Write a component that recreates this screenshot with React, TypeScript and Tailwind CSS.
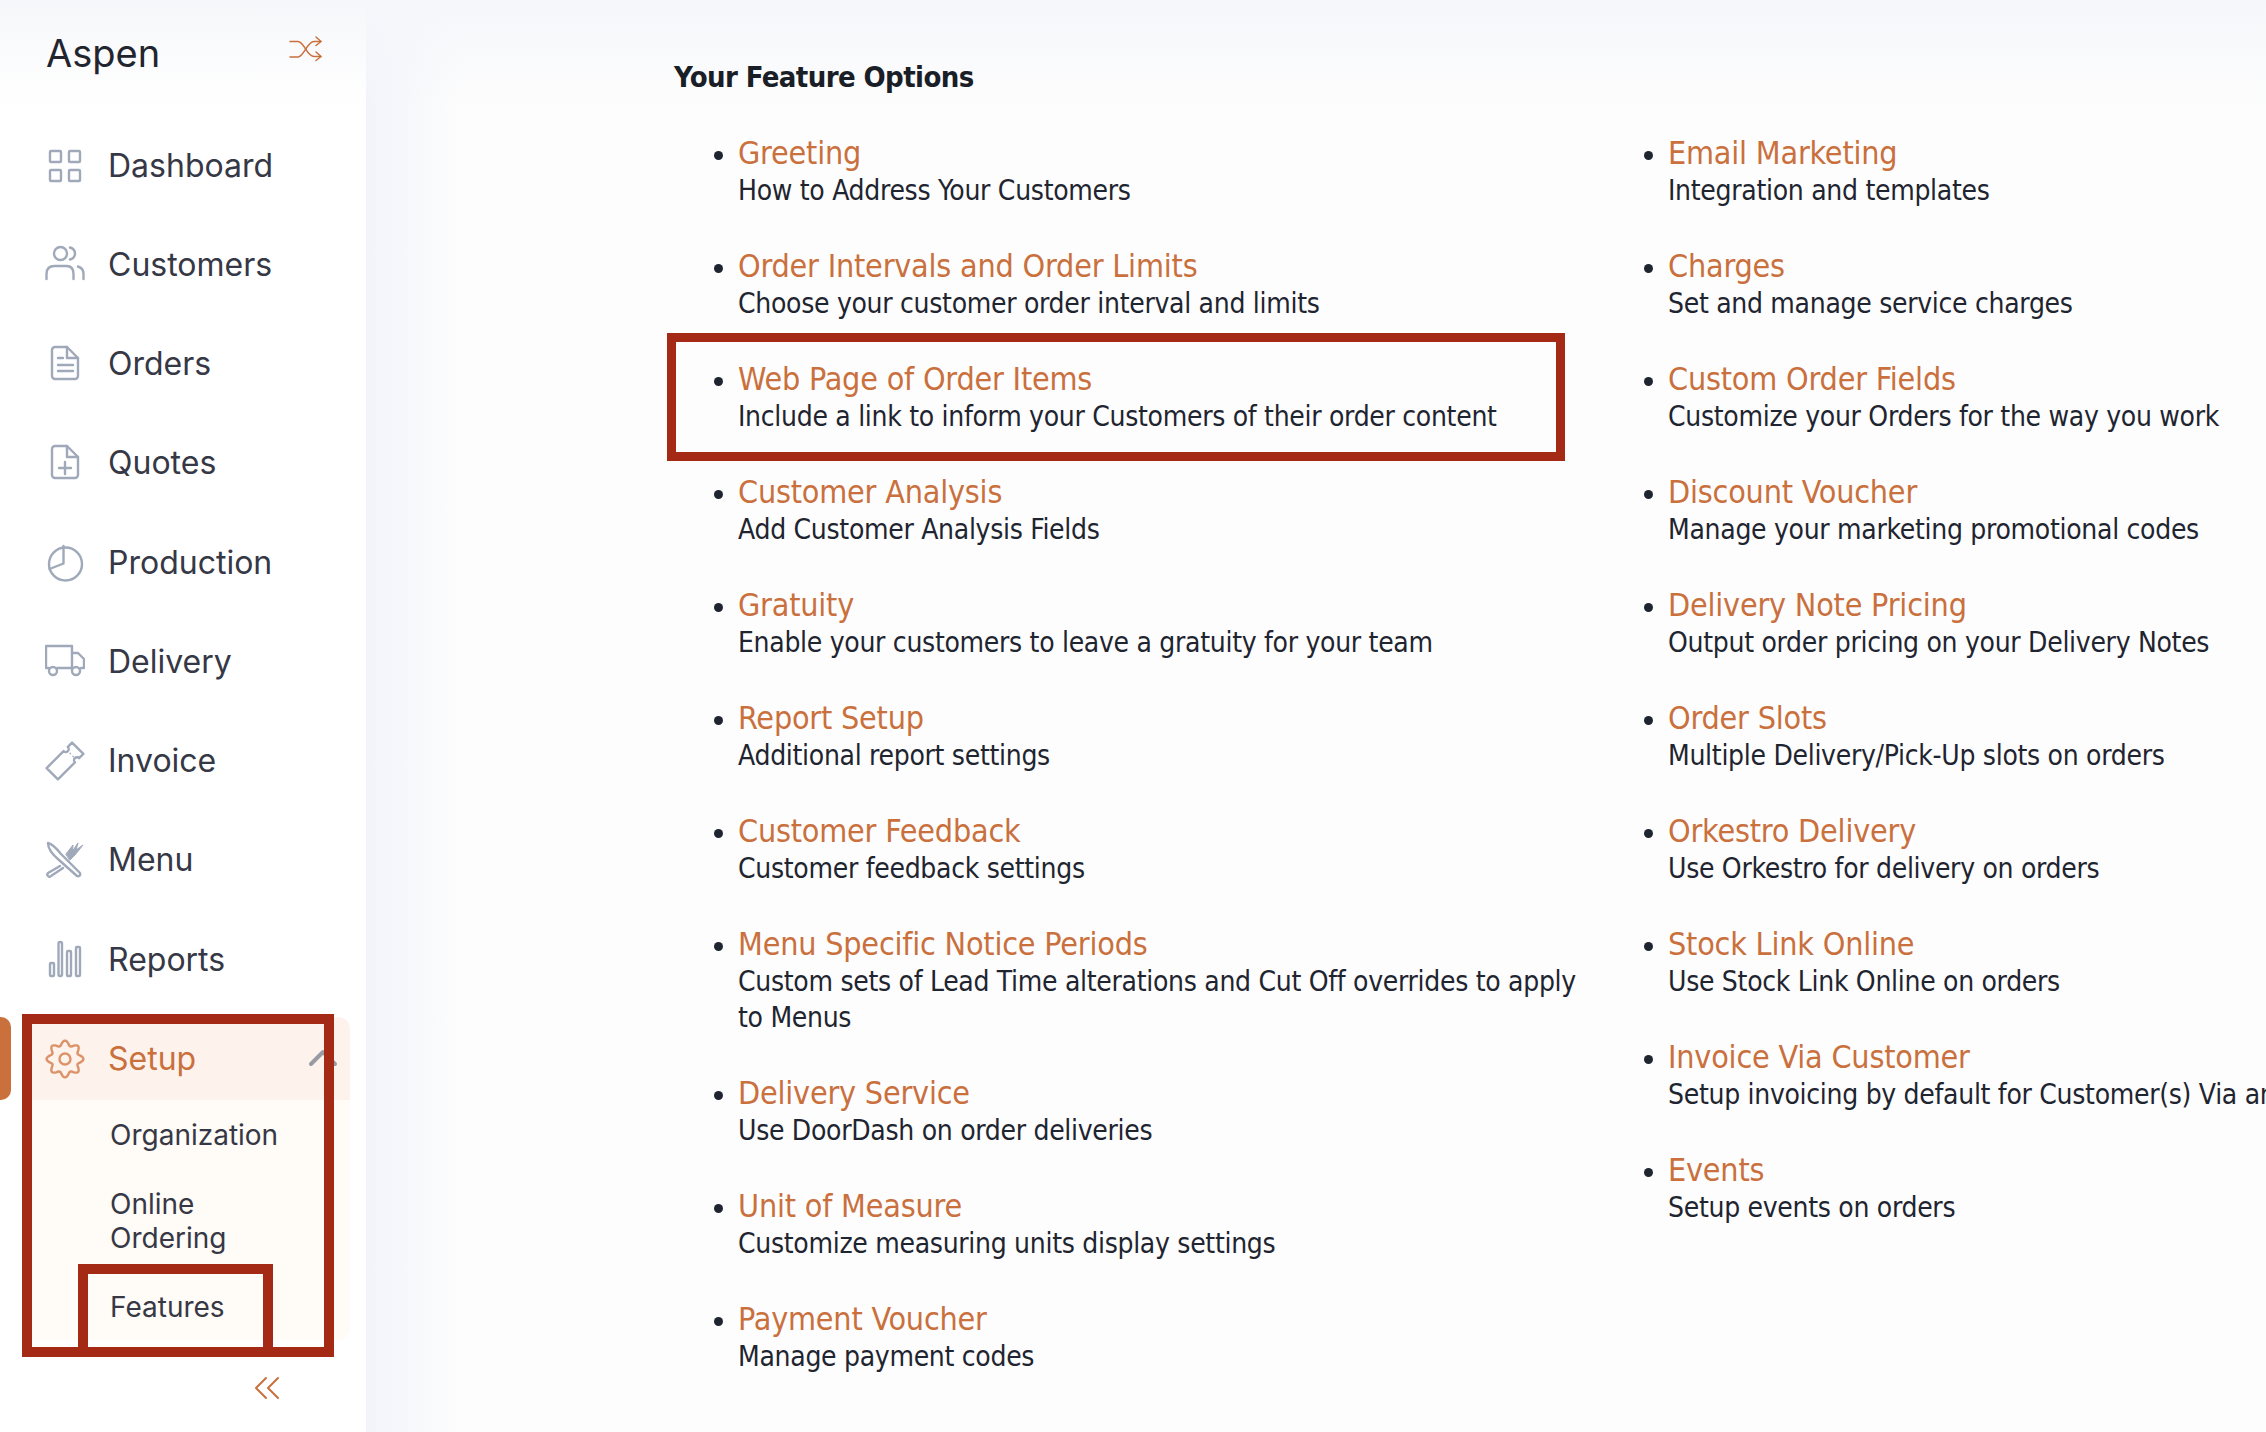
import type { ReactNode } from 'react';
import { ChevronUp } from 'lucide-react';

const iconProps = {
  width: 40,
  height: 40,
  viewBox: '0 0 40 40',
  fill: 'none',
  stroke: '#a0a9ba',
  strokeWidth: 2.4,
  strokeLinecap: 'round' as const,
  strokeLinejoin: 'round' as const,
};

// smooth eight lobed outline for the gear
const gearPath = (() => {
  const points: string[] = [];
  for (let i = 0; i < 160; i++) {
    const a = (i / 160) * Math.PI * 2;
    const r = 16 + 2.4 * Math.cos(8 * a);
    points.push(`${(20 + r * Math.cos(a)).toFixed(2)} ${(20 + r * Math.sin(a)).toFixed(2)}`);
  }
  return `M${points.join('L')}Z`;
})();

const DashboardIcon = () => (
  <svg {...iconProps}>
    <rect x="5" y="5" width="11" height="11" rx="1" />
    <rect x="24" y="5" width="11" height="11" rx="1" />
    <rect x="5" y="24" width="11" height="11" rx="1" />
    <rect x="24" y="24" width="11" height="11" rx="1" />
  </svg>
);

const CustomersIcon = () => (
  <svg {...iconProps}>
    <circle cx="15.5" cy="8.5" r="6.5" />
    <path d="M25 2.500c3.500 1 5 3.500 5 6s-1.500 5-5 6" />
    <path d="M1.500 34v-5c0-5 3-8 8-8h12c5 0 7 3 7 8v5" />
    <path d="M33 21.500c3.500 1 5.500 3.500 5.500 7.500v5" />
  </svg>
);

const OrdersIcon = () => (
  <svg {...iconProps}>
    <path d="M10 3h12l11 11v18a3 3 0 0 1-3 3H10a3 3 0 0 1-3-3V6a3 3 0 0 1 3-3z" />
    <path d="M22 3v11h11" />
    <path d="M13 14h5M13 21h15M13 27h15" />
  </svg>
);

const QuotesIcon = () => (
  <svg {...iconProps}>
    <path d="M10 3h12l11 11v18a3 3 0 0 1-3 3H10a3 3 0 0 1-3-3V6a3 3 0 0 1 3-3z" />
    <path d="M22 3v11h11" />
    <path d="M20 19v12M14 25h12" />
  </svg>
);

const ProductionIcon = () => (
  <svg {...iconProps}>
    <circle cx="20.500" cy="21" r="16.500" />
    <path d="M18.500 3v17.500L4.500 26" />
  </svg>
);

const DeliveryIcon = () => (
  <svg {...iconProps}>
    <path d="M4 26H1V4h26v22H12" />
    <path d="M27 11h6l6 6v9h-3" />
    <path d="M27 26h-1" />
    <circle cx="8" cy="29" r="4" />
    <circle cx="31" cy="29" r="4" />
  </svg>
);

const InvoiceIcon = () => (
  <svg {...iconProps}>
    <g transform="translate(20 20) rotate(-45)">
      <path d="M-18 -8H6a3 3 0 0 0 6 0H18V8H12a3 3 0 0 0-6 0H-18z" />
      <path d="M9 -2v1M9 2v1" strokeWidth="1.200" />
    </g>
  </svg>
);

const MenuIcon = () => (
  <svg {...iconProps}>
    <path d="M3 3c4 1 9 6 13 11l19 19c1 2-1 4-3 3L14 20C8 15 3 9 3 3z" />
    <path d="M15 26L3 33c-2 2 1 5 3 3l12-8" />
    <path d="M21 14L28 5l-.5 6L33 3l-2 7 7-5-8 10-5 5z" fill="#a0a9ba" strokeWidth="1" />
  </svg>
);

const ReportsIcon = () => (
  <svg {...iconProps}>
    <rect x="5" y="23" width="4" height="13" rx="1" />
    <rect x="13.500" y="2" width="3.500" height="34" rx="1.500" />
    <rect x="22" y="11" width="4" height="25" rx="1" />
    <rect x="31" y="7" width="4" height="29" rx="1" />
  </svg>
);

const SetupIcon = () => (
  <svg {...iconProps} stroke="#dc936a">
    <path d={gearPath} />
    <circle cx="20" cy="20" r="5.500" />
  </svg>
);

const ShuffleIcon = () => (
  <svg width="34" height="28" viewBox="0 0 34 28" fill="none" stroke="#c9703d" strokeWidth="1.500" strokeLinecap="round" strokeLinejoin="round">
    <path d="M1 6.500h8c6 0 9 15 16 15h7" />
    <path d="M1 22h8c6 0 9-15.500 16-15.500h7" />
    <path d="M27 2l5 4.500-5 4M27 17l5 4.500-5 4" />
  </svg>
);

const CollapseIcon = () => (
  <svg width="26" height="24" viewBox="0 0 26 24" fill="none" stroke="#c9703d" strokeWidth="2" strokeLinecap="round" strokeLinejoin="round">
    <path d="M12 2L2 12l10 10M24 2L14 12l10 10" />
  </svg>
);

const navItems: { label: string; icon: ReactNode }[] = [
  { label: 'Dashboard', icon: <DashboardIcon /> },
  { label: 'Customers', icon: <CustomersIcon /> },
  { label: 'Orders', icon: <OrdersIcon /> },
  { label: 'Quotes', icon: <QuotesIcon /> },
  { label: 'Production', icon: <ProductionIcon /> },
  { label: 'Delivery', icon: <DeliveryIcon /> },
  { label: 'Invoice', icon: <InvoiceIcon /> },
  { label: 'Menu', icon: <MenuIcon /> },
  { label: 'Reports', icon: <ReportsIcon /> },
];

const leftOptions = [
  { title: 'Greeting', text: 'How to Address Your Customers' },
  { title: 'Order Intervals and Order Limits', text: 'Choose your customer order interval and limits' },
  { title: 'Web Page of Order Items', text: 'Include a link to inform your Customers of their order content', boxed: true },
  { title: 'Customer Analysis', text: 'Add Customer Analysis Fields' },
  { title: 'Gratuity', text: 'Enable your customers to leave a gratuity for your team' },
  { title: 'Report Setup', text: 'Additional report settings' },
  { title: 'Customer Feedback', text: 'Customer feedback settings' },
  { title: 'Menu Specific Notice Periods', text: 'Custom sets of Lead Time alterations and Cut Off overrides to apply to Menus' },
  { title: 'Delivery Service', text: 'Use DoorDash on order deliveries' },
  { title: 'Unit of Measure', text: 'Customize measuring units display settings' },
  { title: 'Payment Voucher', text: 'Manage payment codes' },
];

const rightOptions = [
  { title: 'Email Marketing', text: 'Integration and templates' },
  { title: 'Charges', text: 'Set and manage service charges' },
  { title: 'Custom Order Fields', text: 'Customize your Orders for the way you work' },
  { title: 'Discount Voucher', text: 'Manage your marketing promotional codes' },
  { title: 'Delivery Note Pricing', text: 'Output order pricing on your Delivery Notes' },
  { title: 'Order Slots', text: 'Multiple Delivery/Pick-Up slots on orders' },
  { title: 'Orkestro Delivery', text: 'Use Orkestro for delivery on orders' },
  { title: 'Stock Link Online', text: 'Use Stock Link Online on orders' },
  { title: 'Invoice Via Customer', text: 'Setup invoicing by default for Customer(s) Via an Account' },
  { title: 'Events', text: 'Setup events on orders' },
];

function Option({ title, text, boxed }: { title: string; text: string; boxed?: boolean }) {
  return (
    <li className="relative mb-[38px] list-disc text-[28px] text-[#1f2530] tracking-[-0.3px]">
      {boxed && (
        <div className="absolute -top-[27px] left-[-71px] h-[128px] w-[898px] border-[9px] border-[#a52a16]" />
      )}
      <div className="text-[32px] leading-[39px] tracking-[-0.2px] text-[#c9703d]">{title}</div>
      <div className="leading-[36px]">{text}</div>
    </li>
  );
}

export default function App() {
  return (
    <div className="flex h-[1432px] w-[2266px] overflow-hidden bg-[#fdfdfd]">
      <aside className="relative flex h-full w-[366px] shrink-0 flex-col bg-white font-['Inter',sans-serif]">
        <div className="flex h-[106px] items-center justify-between bg-gradient-to-b from-[#f6f7fa] to-white pl-[46px] pr-[43px]">
          <span className="text-[38px] leading-none text-[#22252e]">Aspen</span>
          <div className="mb-[8px]">
            <ShuffleIcon />
          </div>
        </div>
        <nav className="flex flex-col pt-[10px]">
          {navItems.map((item) => (
            <div key={item.label} className="flex h-[99.25px] items-center gap-[23px] pl-[45px]">
              {item.icon}
              <span className="text-[32px] text-[#363845]">{item.label}</span>
            </div>
          ))}
        </nav>
        <div className="relative ml-[22px] mt-[8px] w-[328px] rounded-[12px] bg-[#fffbf7]">
          <div className="absolute left-[-22px] top-0 h-[83px] w-[11px] rounded-r-[10px] bg-[#c9703d]" />
          <div className="flex h-[83px] items-center gap-[23px] rounded-t-[12px] bg-[#fdf3ec] pl-[23px]">
            <SetupIcon />
            <span className="text-[32px] text-[#c9703d]">Setup</span>
            <ChevronUp size={48} strokeWidth={2} className="absolute right-[3px] top-[17px] text-[#989ba3]" />
          </div>
          <div className="pl-[88px] text-[28px] leading-[34px] text-[#363845]">
            <div className="pb-[35px] pt-[18px]">Organization</div>
            <div className="w-[200px] pb-[35px]">Online Ordering</div>
            <div className="pb-[16px]">Features</div>
          </div>
          {/* Annotation boxes */}
          <div className="absolute left-0 top-[-3px] h-[343px] w-[312px] border-[10px] border-[#a52a16]" />
          <div className="absolute left-[56px] top-[247px] h-[93px] w-[195px] border-[10px] border-[#a52a16]" />
        </div>
        <div className="absolute left-[254px] top-[1376px]">
          <CollapseIcon />
        </div>
      </aside>

      <main className="min-w-0 flex-1 overflow-hidden bg-gradient-to-r from-[#f2f4fa] to-[#fdfdfd] to-[5%] font-['DejaVu_Sans',sans-serif] [font-stretch:condensed]">
        <div className="h-[110px] bg-gradient-to-b from-[#f6f7fb] to-transparent pl-[308px] pt-[59px]">
          <h1 className="text-[29px] font-bold leading-[36px] tracking-[-0.6px] text-[#1a1e27]">Your Feature Options</h1>
        </div>
        <div className="grid w-[1900px] grid-cols-[930px_1fr] pl-[372px] pt-[24px]">
          <ul className="w-[860px]">
            {leftOptions.map((o) => (
              <Option key={o.title} {...o} />
            ))}
          </ul>
          <ul className="whitespace-nowrap">
            {rightOptions.map((o) => (
              <Option key={o.title} {...o} />
            ))}
          </ul>
        </div>
      </main>
    </div>
  );
}
